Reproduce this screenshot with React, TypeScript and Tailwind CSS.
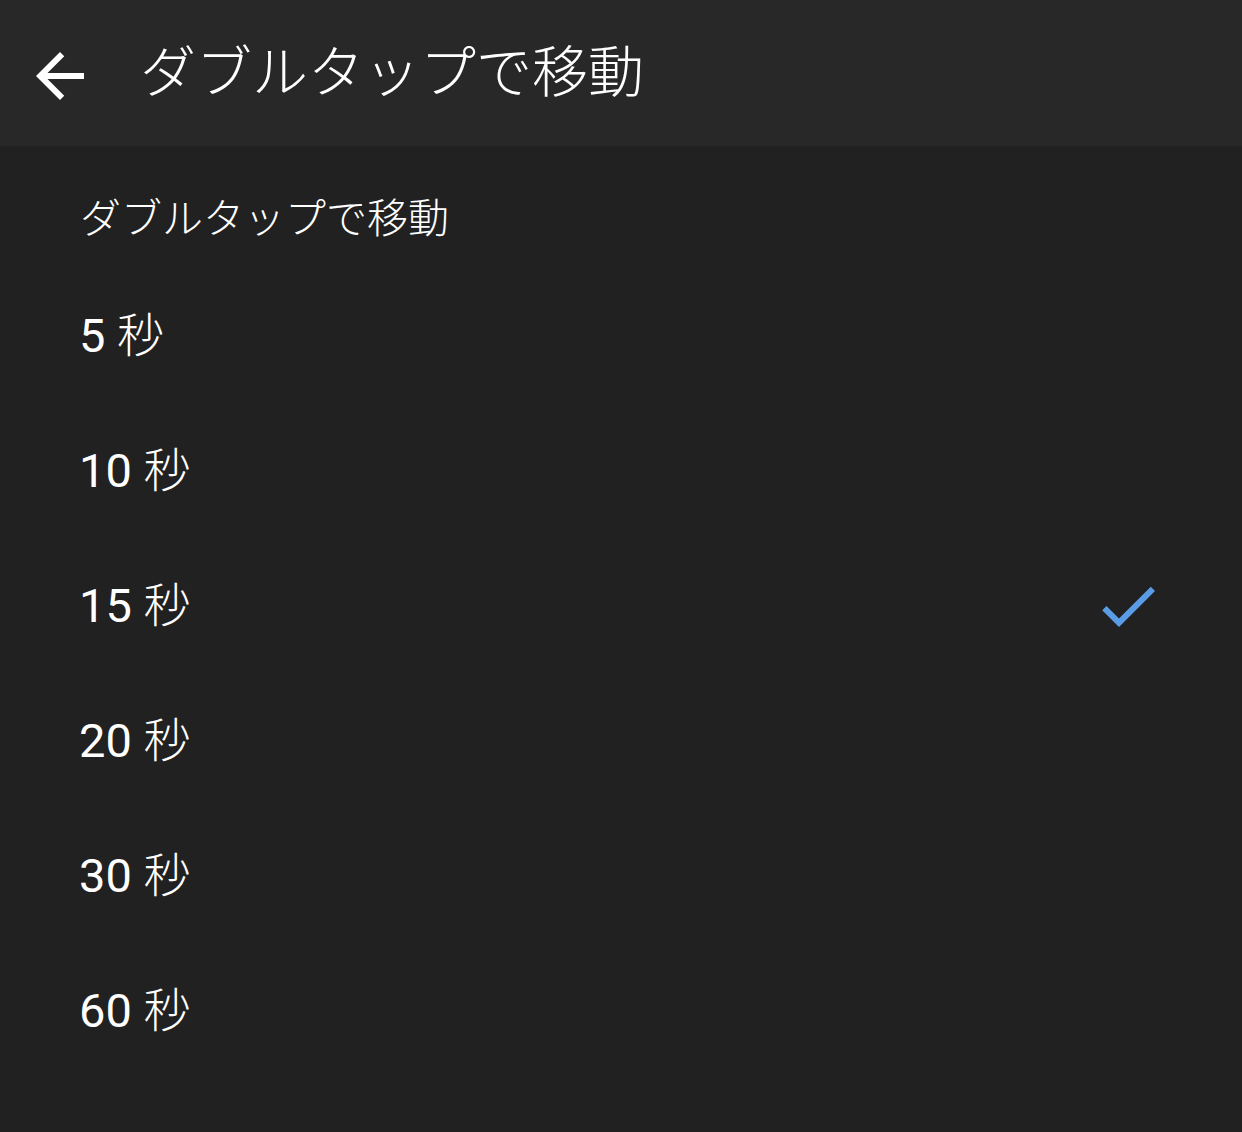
import React, { useState } from 'react';

const options = [5, 10, 15, 20, 30, 60];

const BackArrow: React.FC = () => (
  <svg width="72" height="72" viewBox="0 0 24 24" fill="#ffffff">
    <path d="M20 11H7.83l5.59-5.59L12 4l-8 8 8 8 1.41-1.41L7.83 13H20v-2z" />
  </svg>
);

const Check: React.FC = () => (
  <svg width="72" height="72" viewBox="0 0 24 24" fill="#5a9de6">
    <path d="M9 16.17L4.83 12l-1.42 1.41L9 19 21 7l-1.41-1.41z" />
  </svg>
);

const App: React.FC = () => {
  const [selected, setSelected] = useState(15);

  return (
    <div
      className="w-[1242px] h-[1132px] bg-[#212121] text-white overflow-hidden"
      style={{ fontFamily: "Roboto, 'Noto Sans CJK JP', sans-serif" }}
    >
      <header className="h-[146px] bg-[#282828] flex items-center">
        <button className="ml-[24px] w-[72px] h-[72px] flex items-center justify-center mt-[6px]">
          <BackArrow />
        </button>
        <h1 className="ml-[44px] text-[56px] leading-[64px] font-light">ダブルタップで移動</h1>
      </header>

      <div className="pt-[45px]">
        <div className="pl-[80px] text-[41px] leading-[56px] font-light">ダブルタップで移動</div>
        <ul className="mt-[21px]">
          {options.map((s) => (
            <li
              key={s}
              className="h-[135px] pl-[79px] pr-[78px] flex items-center justify-between cursor-pointer"
              onClick={() => setSelected(s)}
            >
              <span className="text-[47px] leading-[56px]">
                {s} <span className="font-light">秒</span>
              </span>
              {selected === s && <Check />}
            </li>
          ))}
        </ul>
      </div>
    </div>
  );
};

export default App;
